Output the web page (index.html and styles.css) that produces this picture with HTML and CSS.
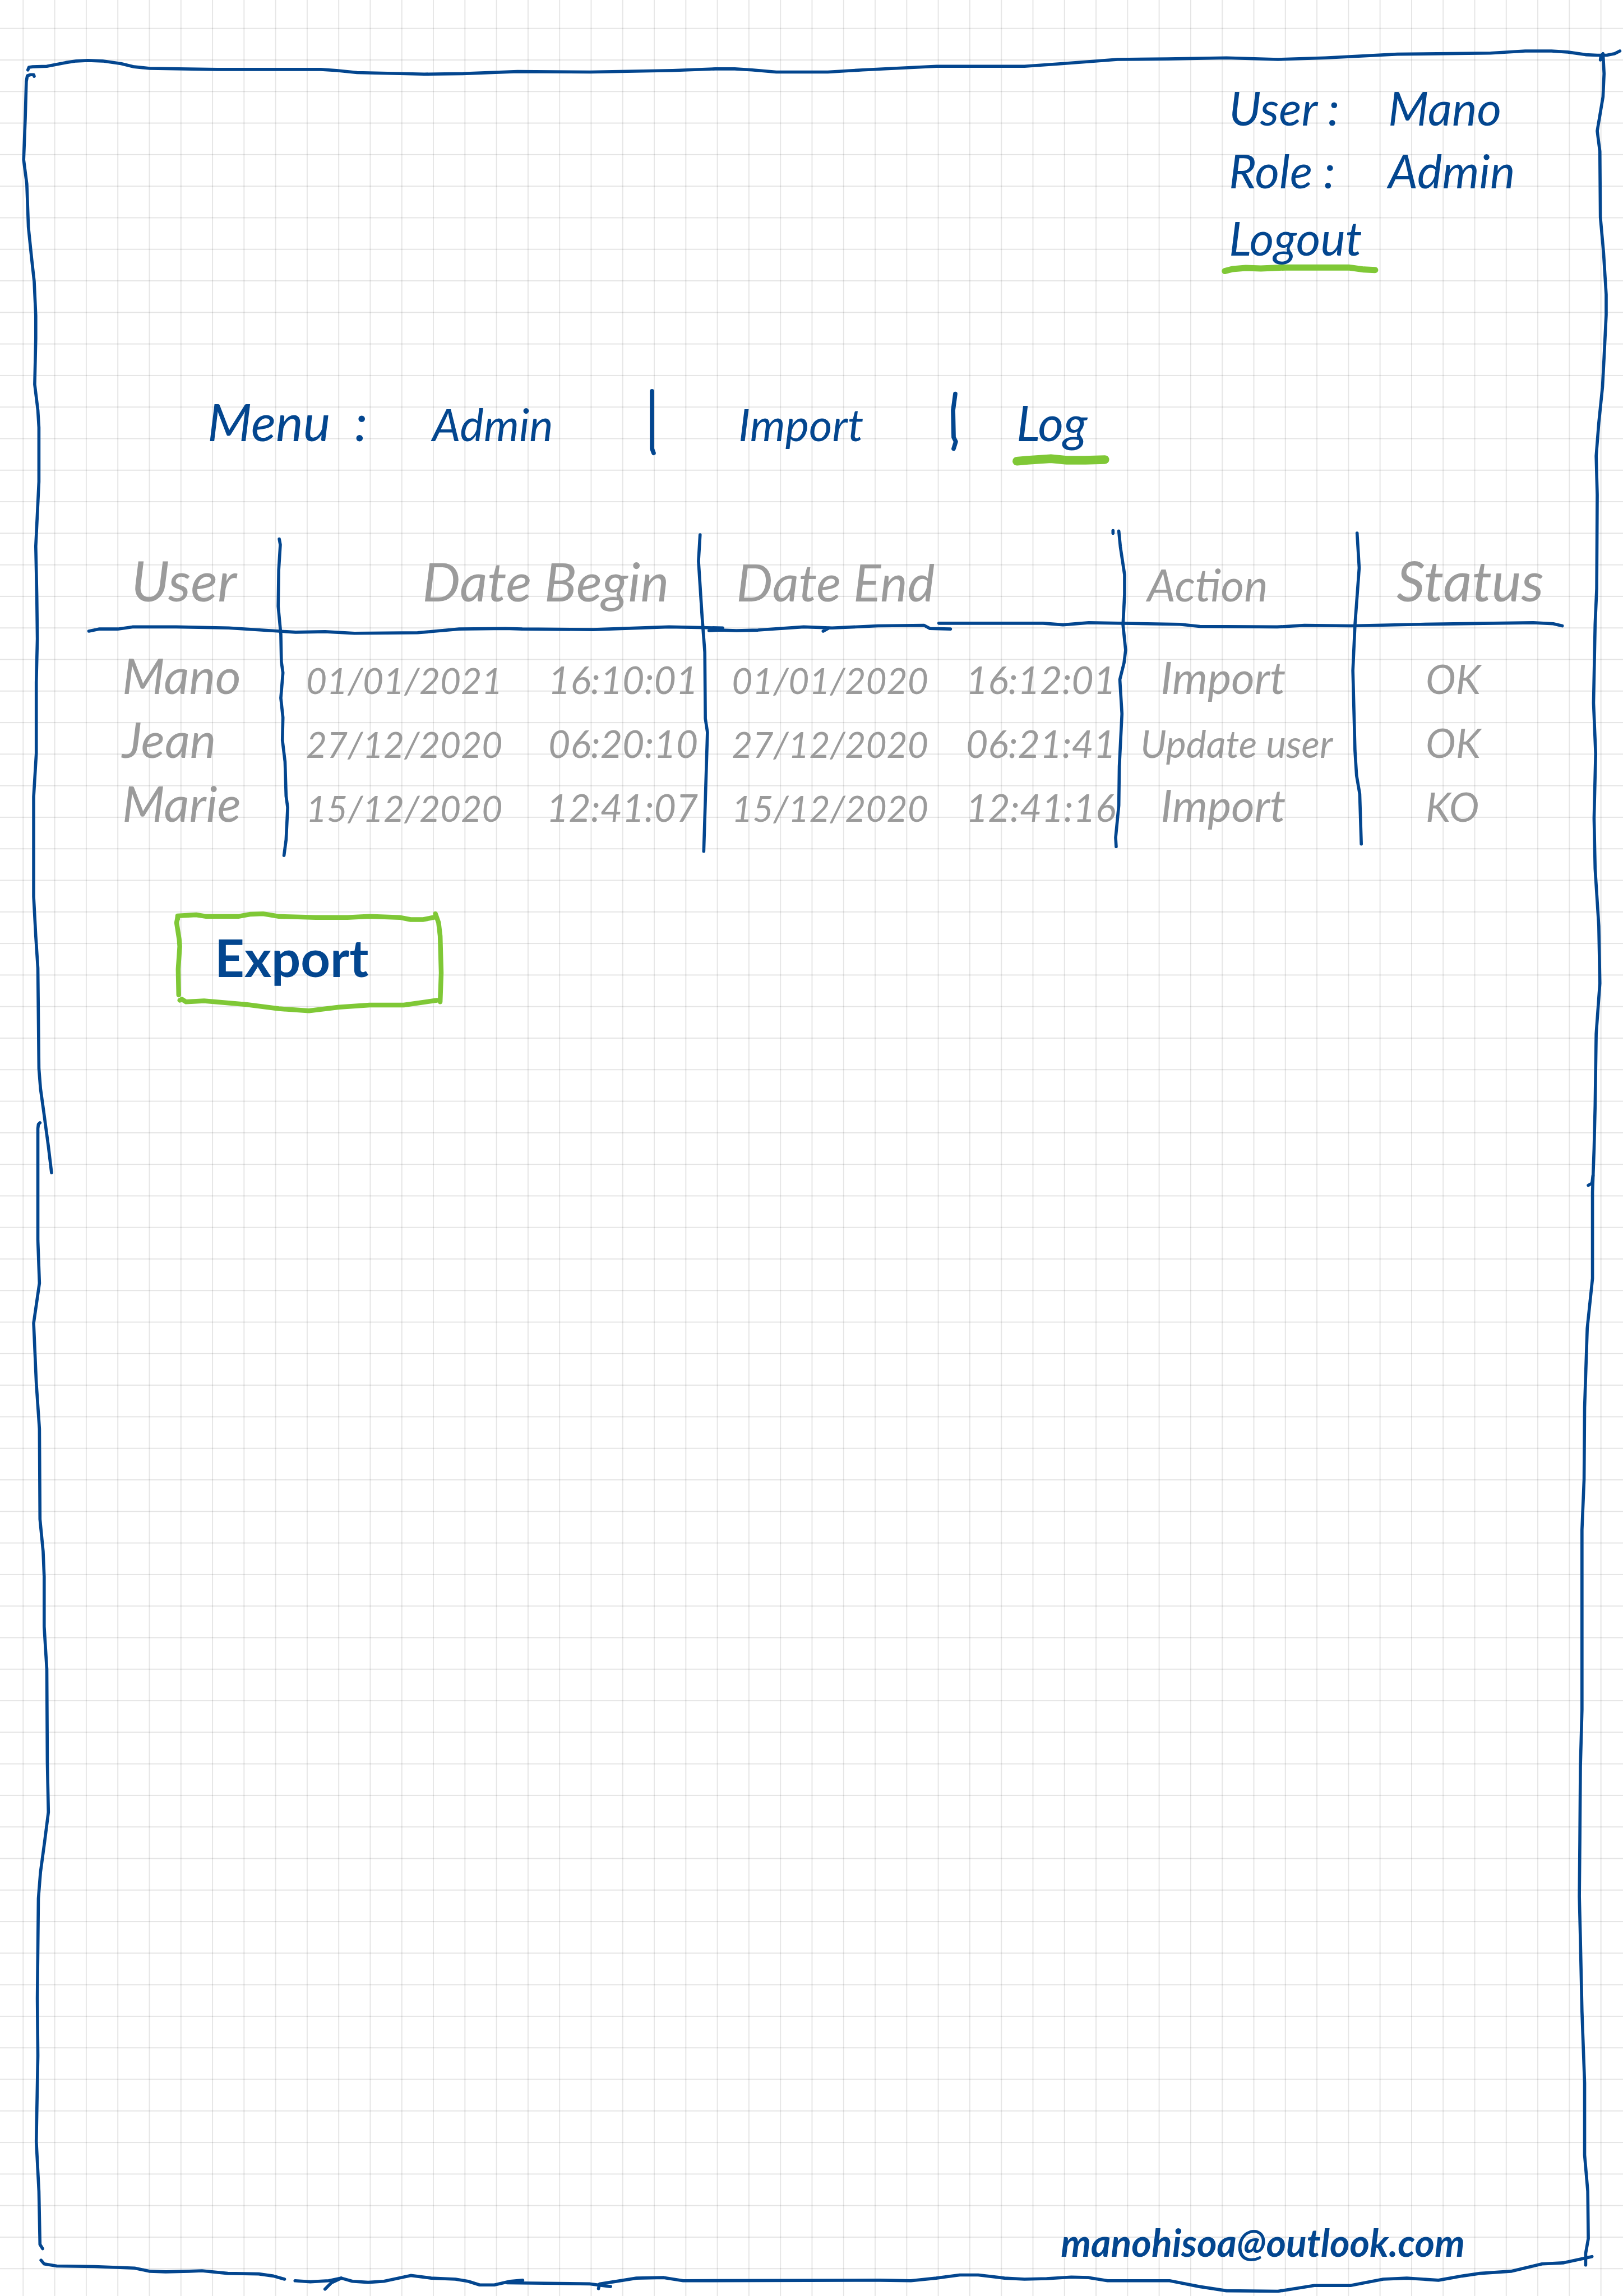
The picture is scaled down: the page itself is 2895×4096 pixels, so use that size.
FILE: index.html
```html
<!DOCTYPE html>
<html lang="en">
<head>
<meta charset="utf-8">
<title>Log</title>
<link rel="stylesheet" href="styles.css">
</head>
<body>
<div class="page">
  <svg class="paper" viewBox="0 0 3086 4366" preserveAspectRatio="none" aria-hidden="true">
    <defs>
      <pattern id="squares" x="43" y="53" width="60" height="60" patternUnits="userSpaceOnUse">
        <path class="grid-line" d="M0 0H60V2H0Z"/>
        <path class="grid-line" d="M0 0H2V60H0Z"/>
      </pattern>
    </defs>
    <rect width="3086" height="4366" fill="url(#squares)"/>
    <g class="ink frame">
      <path d="M53 133L55 128L62 127L89 126L125 119L145 116L167 115L195 116L230 121L255 127L285 130L413 132L610 132L640 134L679 138L807 141L880 140L984 136L1122 137L1279 134L1360 131L1397 131L1430 133L1476 137L1574 137L1640 133L1781 126L1948 126L2020 121L2125 113L2220 112L2332 110L2430 113L2520 110L2657 103L2834 101L2900 97L2950 97L2981 99L3015 104L3037 105L3055 105L3070 102L3080 97"/>
      <path d="M65 145L64 142L58 142L52 144L50 155L48 225L45 304L51 350L54 432L60 490L65 535L68 600L68 644L66 731L72 780L74 813L74 916L68 1039L70 1134L71 1215L69 1297L69 1433L64 1515L64 1705L68 1780L72 1841L74 2032L77 2070L83 2113L92 2180L98 2230"/>
      <path d="M76 2135L73 2138L72 2146L72 2358L75 2440L64 2516L69 2630L75 2717L76 2889L82 2950L84 2998L84 3093L89 3174L90 3351L92 3446L85 3501L77 3560L73 3610L71 3800L72 3909L69 4072L74 4167L76 4268L81 4276"/>
      <path d="M3043 114L3044 107L3048 102L3050 140L3048 184L3037 249L3042 288L3043 413L3049 480L3054 560L3054 599L3050 680L3047 736L3040 804L3035 867L3037 941L3036 1119L3033 1187L3030 1337L3034 1433L3031 1556L3033 1652L3040 1761L3042 1870L3035 1966L3033 2103L3031 2185L3028 2267L3028 2431L3018 2526L3013 2677L3012 2813L3008 2909L3008 3251L3005 3360L3004 3497L3003 3606L3005 3688L3008 3825L3013 3961L3013 4098L3019 4167L3020 4257L3015 4285L3015 4307"/>
      <path d="M3020 2254L3027 2250L3029 2235"/>
      <path d="M78 4298L84 4305L108 4309L180 4310L256 4313L285 4319L315 4320L360 4319L384 4318L433 4323L492 4324L520 4328L541 4334"/>
      <path d="M561 4337L590 4339L625 4337L649 4332L670 4338L700 4340L730 4338L781 4327L820 4332L866 4334L890 4338L912 4345L940 4345L970 4338L994 4336"/>
      <path d="M649 4332L630 4341L618 4353"/>
      <path d="M964 4341L1060 4342L1122 4343L1161 4348"/>
      <path d="M1138 4352L1140 4343L1160 4340L1210 4332L1262 4331L1299 4337L1673 4336L1732 4337L1780 4332L1825 4326L1860 4326L1910 4332L1948 4334L1990 4333L2037 4330L2070 4331L2106 4337L2224 4337L2280 4348L2332 4356L2430 4357L2499 4346L2568 4346L2630 4334L2675 4332L2735 4336L2780 4328L2814 4323L2873 4319L2932 4305L2972 4303L3027 4291"/>
    </g>
  </svg>

  <header class="account">
    <dl class="account-list">
      <dt>User :</dt><dd>Mano</dd>
      <dt>Role :</dt><dd>Admin</dd>
    </dl>
    <a class="marked logout" href="#logout">Logout
      <svg class="marker" viewBox="2330 500 282 24" preserveAspectRatio="none" aria-hidden="true"><path d="M2331 517L2345 513L2370 511L2398 512L2443 510L2562 510L2590 514L2611 515"/></svg>
    </a>
  </header>

  <nav class="menu" aria-label="Menu">
    <span class="menu-label">Menu&nbsp;&nbsp;:</span>
    <a href="#admin">Admin</a>
    <svg class="ink divider" viewBox="1227 738 24 124" aria-hidden="true"><path d="M1239 742L1239 848L1242 856"/></svg>
    <a href="#import">Import</a>
    <svg class="ink divider" viewBox="1797 738 24 124" aria-hidden="true"><path d="M1811 747L1807 777L1808 827L1812 835L1808 848"/></svg>
    <a class="marked current" href="#log" aria-current="page">Log
      <svg class="marker wide" viewBox="1928 861 170 24" preserveAspectRatio="none" aria-hidden="true"><path d="M1929 876L1950 874L1994 871L2024 874L2060 874L2097 873"/></svg>
    </a>
  </nav>

  <main>
    <div class="log">
      <table>
        <colgroup><col class="c-user"><col class="c-begin"><col class="c-end"><col class="c-action"><col class="c-status"></colgroup>
        <thead>
          <tr><th class="user">User</th><th class="begin">Date Begin</th><th class="end">Date End</th><th class="action">Action</th><th class="status">Status</th></tr>
        </thead>
        <tbody>
          <tr><td class="user">Mano</td><td class="when"><div><span>01/01/2021</span><span class="time">16:10:01</span></div></td><td class="when"><div><span>01/01/2020</span><span class="time">16:12:01</span></div></td><td class="action">Import</td><td class="status">OK</td></tr>
          <tr><td class="user">Jean</td><td class="when"><div><span>27/12/2020</span><span class="time">06:20:10</span></div></td><td class="when"><div><span>27/12/2020</span><span class="time">06:21:41</span></div></td><td class="action long">Update user</td><td class="status">OK</td></tr>
          <tr><td class="user">Marie</td><td class="when"><div><span>15/12/2020</span><span class="time">12:41:07</span></div></td><td class="when"><div><span>15/12/2020</span><span class="time">12:41:16</span></div></td><td class="action">Import</td><td class="status">KO</td></tr>
        </tbody>
      </table>
      <svg class="ink rules" viewBox="160 1000 2820 630" preserveAspectRatio="none" aria-hidden="true">
        <path d="M531 1025L533 1036L530 1084L529 1153L534 1206L535 1258L538 1279L534 1327L538 1364L537 1407L542 1448L544 1513L547 1535L544 1596L540 1626"/>
        <path d="M1331 1017L1328 1067L1335 1175L1340 1240L1341 1366L1345 1392L1341 1522L1338 1618"/>
        <path d="M2127 1010L2130 1040L2138 1093L2138 1130L2135 1188L2140 1236L2137 1260L2129 1292L2133 1357L2128 1457L2127 1531L2121 1592L2122 1609M2116 1009V1014"/>
        <path d="M2580 1014L2584 1080L2576 1188L2572 1275L2576 1427L2579 1474L2585 1509L2588 1604"/>
        <path d="M169 1200L188 1196L224 1196L252 1192L335 1192L435 1194L562 1202L618 1201L674 1204L794 1203L873 1196L961 1195L993 1196L1128 1197L1272 1192L1374 1194"/>
        <path d="M1348 1199L1370 1198L1400 1199L1441 1198L1528 1192L1582 1194L1669 1190L1757 1189L1768 1195L1807 1196M1565 1200L1576 1194"/>
        <path d="M1785 1185L1983 1185L2021 1188L2070 1184L2243 1187L2281 1191L2428 1192L2480 1189L2568 1190L2700 1187L2915 1184L2953 1186L2970 1190"/>
      </svg>
    </div>

    <button class="export" type="button">Export
      <svg class="box" viewBox="336 1740 502 170" preserveAspectRatio="none" aria-hidden="true">
        <path d="M338 1748L338 1742L373 1740L392 1743L453 1743L475 1739L500 1738L530 1743L600 1745L660 1745L702 1743L759 1745L780 1749L804 1749L828 1744"/>
        <path d="M827 1738L833 1755L836 1780L838 1850L836 1905"/>
        <path d="M342 1902L346 1900L354 1905L388 1903L468 1910L530 1918L587 1922L644 1915L702 1911L767 1911L830 1902"/>
        <path d="M338 1745L336 1755L341 1787L342 1800L339 1843L340 1892"/>
      </svg>
    </button>
  </main>

  <footer class="contact"><a href="mailto:manohisoa@outlook.com">manohisoa@outlook.com</a></footer>
</div>
</body>
</html>
```
FILE: styles.css
```css
:root {
  --ink: #03468f;
  --pencil: #9b9b9b;
  --marker: #7fc836;
}

* { box-sizing: border-box; }

body {
  margin: 0;
  background: #fff;
  color: var(--ink);
  font: italic 84px/120px Lato, "Open Sans", sans-serif;
}

a { color: inherit; text-decoration: none; }

.page {
  position: relative;
  display: flex;
  flex-direction: column;
  min-height: 100vh;
  padding: 136px 99px 56px 150px;
}

.paper {
  position: absolute;
  inset: 0;
  z-index: -1;
  width: 100%;
  height: 100%;
}

.grid-line { fill: rgb(0 0 0 / 10%); }

.ink path {
  fill: none;
  stroke: var(--ink);
  stroke-width: 6px;
  stroke-linecap: round;
  stroke-linejoin: round;
}

/* Highlighter stroke below a link */
.marked { position: relative; width: max-content; }

.marker {
  position: absolute;
  left: -8px;
  bottom: -2px;
  width: calc(100% + 32px);
  height: 22px;
  overflow: visible;
}

.marker path,
.box path {
  fill: none;
  stroke: var(--marker);
  stroke-width: 12px;
  stroke-linecap: round;
  stroke-linejoin: round;
}

.marker.wide { left: 0; bottom: -18px; }
.marker.wide path { stroke-width: 17px; }

.account {
  display: flex;
  flex-direction: column;
  width: 604px;
  margin-left: auto;
}

.account-list {
  display: grid;
  grid-template-columns: 284px 1fr;
  margin: 0;
  line-height: 112px;
}

.account-list dd { margin: 0; }
.logout { line-height: 128px; }

.menu {
  display: grid;
  grid-template-columns: 401px 380px 166px 373px 123px auto;
  align-items: baseline;
  margin-top: 204px;
  padding-left: 220px;
  font-size: 80px;
}

.menu-label { font-size: 92px; }
.menu .current { font-size: 88px; }

.divider {
  align-self: center;
  width: 24px;
  height: 120px;
}

.divider path { stroke-width: 8px; }

.log {
  position: relative;
  margin-top: 122px;
  padding-bottom: 36px;
  color: var(--pencil);
}

table {
  width: 100%;
  border-collapse: collapse;
  table-layout: fixed;
}

.c-user { width: 13%; }
.c-begin { width: 29%; }
.c-end { width: 28%; }
.c-action, .c-status { width: 15%; }

th, td {
  padding: 0;
  text-align: left;
  vertical-align: baseline;
  white-space: nowrap;
}

th {
  padding: 40px 0 24px;
  font-size: 100px;
  font-weight: 400;
  line-height: 112px;
}

th.user { padding-left: 84px; }
th.begin { padding-right: 68px; font-size: 96px; text-align: right; }
th.end { padding-left: 52px; font-size: 92px; }
th.action { padding-left: 44px; font-size: 80px; }
th.status { padding-left: 92px; }

td { font-size: 64px; line-height: 104px; }
td.user { padding-left: 68px; font-size: 88px; }
td.when { padding: 0 16px 0 52px; }
td.when:nth-child(3) { padding: 0 12px 0 44px; }
td.when div { display: flex; align-items: baseline; justify-content: space-between; }
td .time { font-size: 68px; }
td.action { padding-left: 68px; font-size: 80px; }
td.action.long { padding-left: 32px; font-size: 68px; }
td.status { padding-left: 144px; font-size: 72px; }

tbody::before {
  content: "";
  display: table-row;
  height: 30px;
}

.rules {
  position: absolute;
  inset: 0;
  width: 100%;
  height: 100%;
  overflow: visible;
}

.export {
  position: relative;
  display: block;
  width: 472px;
  height: 160px;
  margin: 102px 0 0 165px;
  padding: 0 0 8px 68px;
  border: 0;
  background: none;
  color: inherit;
  font: 700 92px/120px Lato, "Open Sans", sans-serif;
  text-align: left;
}

.box {
  position: absolute;
  inset: 0;
  width: 100%;
  height: 100%;
  overflow: visible;
}

.box path { stroke-width: 9px; }

.contact {
  margin-top: auto;
  padding-right: 183px;
  font-size: 68px;
  font-weight: 700;
  line-height: 80px;
  text-align: right;
}
```
